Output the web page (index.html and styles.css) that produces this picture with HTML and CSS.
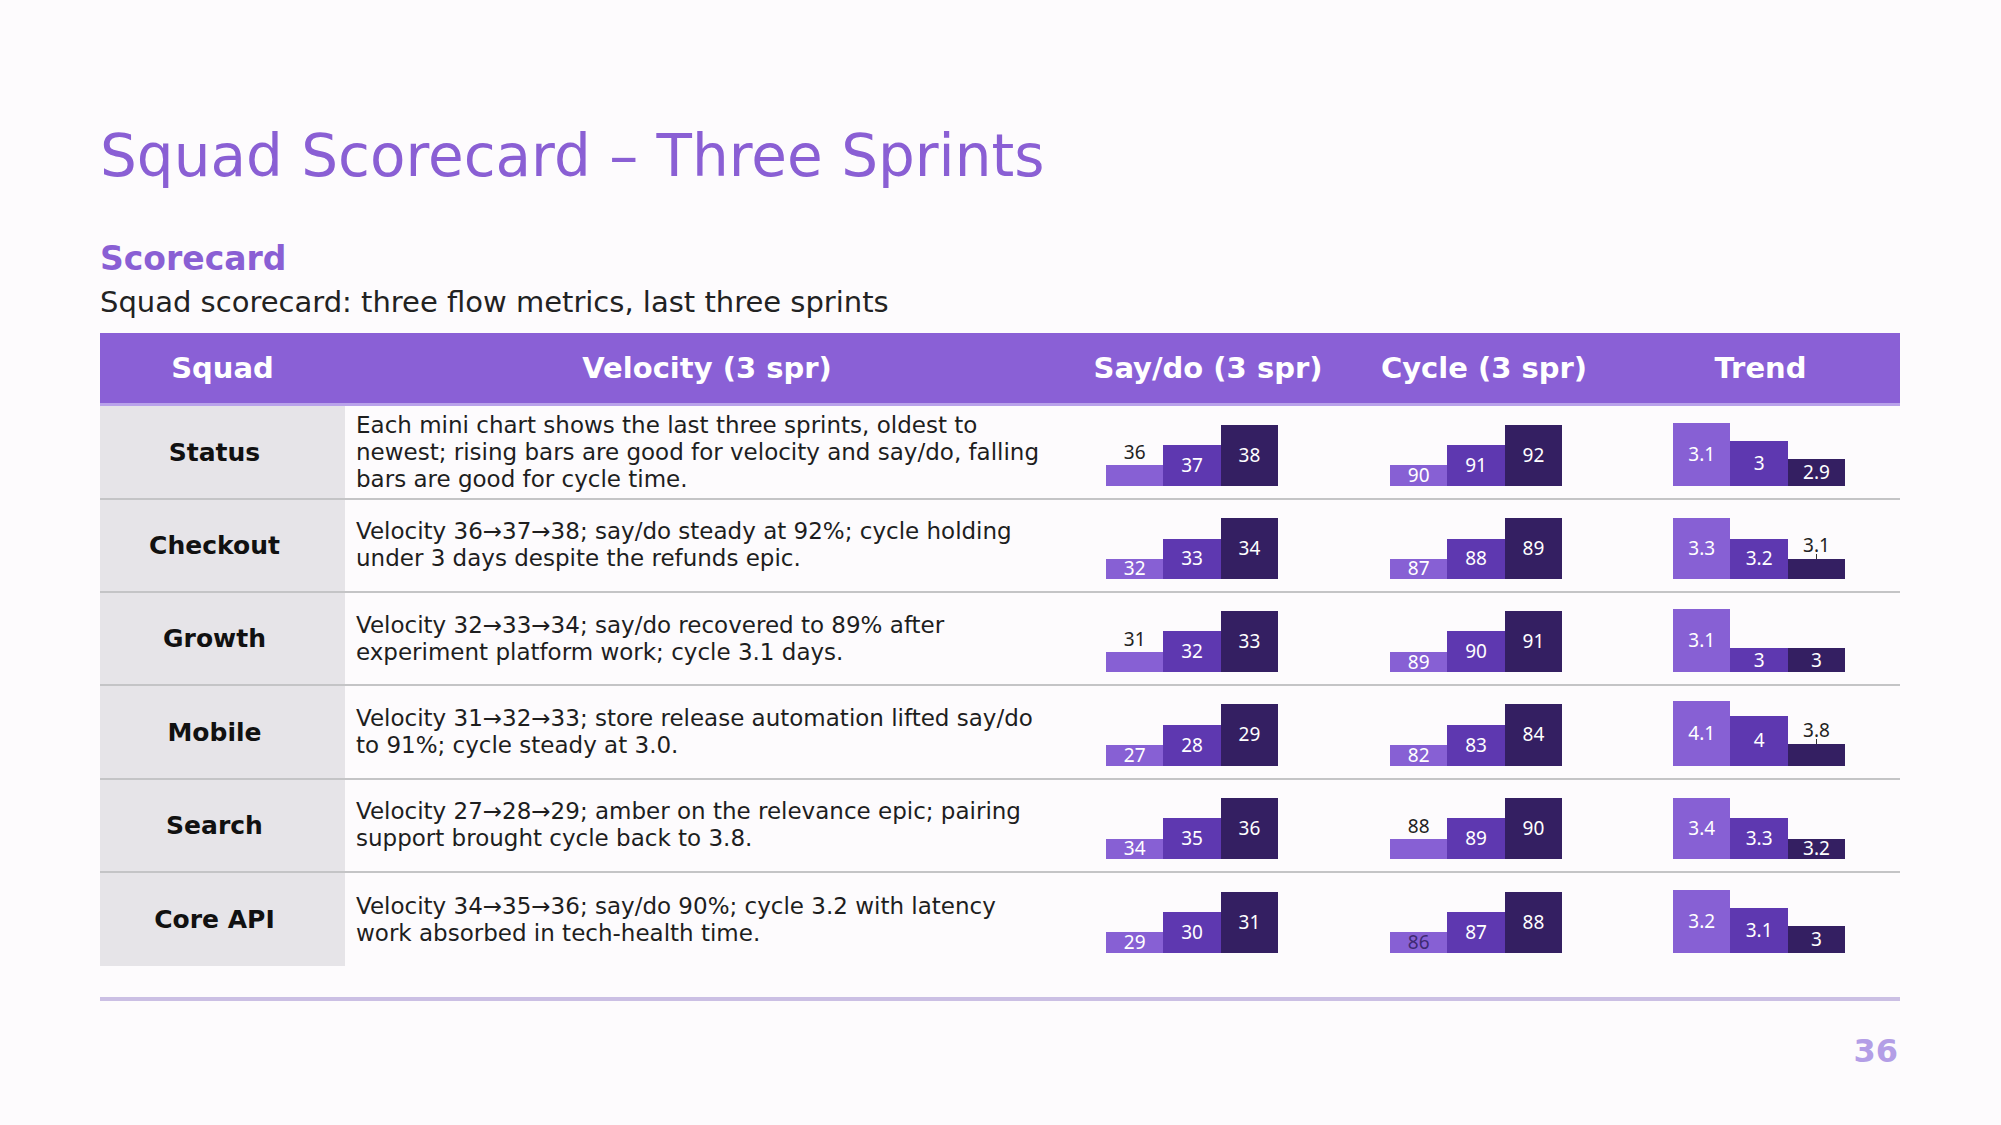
FILE: index.html
```html
<!DOCTYPE html>
<html lang="en">
<head>
    <meta charset="UTF-8">
    <meta name="viewport" content="width=device-width, initial-scale=1">
    <title>Squad Scorecard – Three Sprints</title>
    <link rel="stylesheet" href="styles.css">
</head>
<body>
    <div class="slide">
        <h1 class="title">Squad Scorecard – Three Sprints</h1>
        <h2 class="section">Scorecard</h2>
        <p class="caption">Squad scorecard: three flow metrics, last three sprints</p>

        <div class="scorecard">
            <div class="row head">
                <div class="cell">Squad</div>
                <div class="cell">Velocity (3 spr)</div>
                <div class="cell">Say/do (3 spr)</div>
                <div class="cell">Cycle (3 spr)</div>
                <div class="cell">Trend</div>
            </div>

            <div class="row">
                <div class="cell squad">Status</div>
                <div class="cell note">Each mini chart shows the last three sprints, oldest to newest; rising bars are good for velocity and say/do, falling bars are good for cycle time.</div>
                <div class="cell chart-cell vel">
                    <div class="mini">
                        <div class="col"><span class="out">36</span><div class="bar c1" style="height:21px"></div></div>
                        <div class="col"><div class="bar c2" style="height:41px">37</div></div>
                        <div class="col"><div class="bar c3" style="height:61px">38</div></div>
                    </div>
                </div>
                <div class="cell chart-cell cyc">
                    <div class="mini">
                        <div class="col"><div class="bar c1" style="height:21px">90</div></div>
                        <div class="col"><div class="bar c2" style="height:41px">91</div></div>
                        <div class="col"><div class="bar c3" style="height:61px">92</div></div>
                    </div>
                </div>
                <div class="cell chart-cell trend">
                    <div class="mini">
                        <div class="col"><div class="bar c1" style="height:63px">3.1</div></div>
                        <div class="col"><div class="bar c2" style="height:45px">3</div></div>
                        <div class="col"><div class="bar c3" style="height:27px">2.9</div></div>
                    </div>
                </div>
            </div>

            <div class="row">
                <div class="cell squad">Checkout</div>
                <div class="cell note">Velocity 36→37→38; say/do steady at 92%; cycle holding under 3 days despite the refunds epic.</div>
                <div class="cell chart-cell vel">
                    <div class="mini">
                        <div class="col"><div class="bar c1" style="height:20px">32</div></div>
                        <div class="col"><div class="bar c2" style="height:40px">33</div></div>
                        <div class="col"><div class="bar c3" style="height:61px">34</div></div>
                    </div>
                </div>
                <div class="cell chart-cell cyc">
                    <div class="mini">
                        <div class="col"><div class="bar c1" style="height:20px">87</div></div>
                        <div class="col"><div class="bar c2" style="height:40px">88</div></div>
                        <div class="col"><div class="bar c3" style="height:61px">89</div></div>
                    </div>
                </div>
                <div class="cell chart-cell trend">
                    <div class="mini">
                        <div class="col"><div class="bar c1" style="height:61px">3.3</div></div>
                        <div class="col"><div class="bar c2" style="height:40px">3.2</div></div>
                        <div class="col"><span class="out">3.1</span><i class="tick"></i><div class="bar c3" style="height:20px"></div></div>
                    </div>
                </div>
            </div>

            <div class="row">
                <div class="cell squad">Growth</div>
                <div class="cell note">Velocity 32→33→34; say/do recovered to 89% after experiment platform work; cycle 3.1 days.</div>
                <div class="cell chart-cell vel">
                    <div class="mini">
                        <div class="col"><span class="out">31</span><div class="bar c1" style="height:20px"></div></div>
                        <div class="col"><div class="bar c2" style="height:41px">32</div></div>
                        <div class="col"><div class="bar c3" style="height:61px">33</div></div>
                    </div>
                </div>
                <div class="cell chart-cell cyc">
                    <div class="mini">
                        <div class="col"><div class="bar c1" style="height:20px">89</div></div>
                        <div class="col"><div class="bar c2" style="height:41px">90</div></div>
                        <div class="col"><div class="bar c3" style="height:61px">91</div></div>
                    </div>
                </div>
                <div class="cell chart-cell trend">
                    <div class="mini">
                        <div class="col"><div class="bar c1" style="height:63px">3.1</div></div>
                        <div class="col"><div class="bar c2" style="height:24px">3</div></div>
                        <div class="col"><div class="bar c3" style="height:24px">3</div></div>
                    </div>
                </div>
            </div>

            <div class="row">
                <div class="cell squad">Mobile</div>
                <div class="cell note">Velocity 31→32→33; store release automation lifted say/do to 91%; cycle steady at 3.0.</div>
                <div class="cell chart-cell vel">
                    <div class="mini">
                        <div class="col"><div class="bar c1" style="height:21px">27</div></div>
                        <div class="col"><div class="bar c2" style="height:41px">28</div></div>
                        <div class="col"><div class="bar c3" style="height:62px">29</div></div>
                    </div>
                </div>
                <div class="cell chart-cell cyc">
                    <div class="mini">
                        <div class="col"><div class="bar c1" style="height:21px">82</div></div>
                        <div class="col"><div class="bar c2" style="height:41px">83</div></div>
                        <div class="col"><div class="bar c3" style="height:62px">84</div></div>
                    </div>
                </div>
                <div class="cell chart-cell trend">
                    <div class="mini">
                        <div class="col"><div class="bar c1" style="height:65px">4.1</div></div>
                        <div class="col"><div class="bar c2" style="height:50px">4</div></div>
                        <div class="col"><span class="out">3.8</span><i class="tick"></i><div class="bar c3" style="height:22px"></div></div>
                    </div>
                </div>
            </div>

            <div class="row">
                <div class="cell squad">Search</div>
                <div class="cell note">Velocity 27→28→29; amber on the relevance epic; pairing support brought cycle back to 3.8.</div>
                <div class="cell chart-cell vel">
                    <div class="mini">
                        <div class="col"><div class="bar c1" style="height:20px">34</div></div>
                        <div class="col"><div class="bar c2" style="height:41px">35</div></div>
                        <div class="col"><div class="bar c3" style="height:61px">36</div></div>
                    </div>
                </div>
                <div class="cell chart-cell cyc">
                    <div class="mini">
                        <div class="col"><span class="out">88</span><div class="bar c1" style="height:20px"></div></div>
                        <div class="col"><div class="bar c2" style="height:41px">89</div></div>
                        <div class="col"><div class="bar c3" style="height:61px">90</div></div>
                    </div>
                </div>
                <div class="cell chart-cell trend">
                    <div class="mini">
                        <div class="col"><div class="bar c1" style="height:61px">3.4</div></div>
                        <div class="col"><div class="bar c2" style="height:41px">3.3</div></div>
                        <div class="col"><div class="bar c3" style="height:20px">3.2</div></div>
                    </div>
                </div>
            </div>

            <div class="row">
                <div class="cell squad">Core API</div>
                <div class="cell note">Velocity 34→35→36; say/do 90%; cycle 3.2 with latency work absorbed in tech-health time.</div>
                <div class="cell chart-cell vel">
                    <div class="mini">
                        <div class="col"><div class="bar c1" style="height:21px">29</div></div>
                        <div class="col"><div class="bar c2" style="height:41px">30</div></div>
                        <div class="col"><div class="bar c3" style="height:61px">31</div></div>
                    </div>
                </div>
                <div class="cell chart-cell cyc">
                    <div class="mini">
                        <div class="col"><div class="bar c1 dim" style="height:21px">86</div></div>
                        <div class="col"><div class="bar c2" style="height:41px">87</div></div>
                        <div class="col"><div class="bar c3" style="height:61px">88</div></div>
                    </div>
                </div>
                <div class="cell chart-cell trend">
                    <div class="mini">
                        <div class="col"><div class="bar c1" style="height:63px">3.2</div></div>
                        <div class="col"><div class="bar c2" style="height:45px">3.1</div></div>
                        <div class="col"><div class="bar c3" style="height:27px">3</div></div>
                    </div>
                </div>
            </div>
        </div>

        <div class="rule"></div>
        <div class="page-num">36</div>
    </div>
</body>
</html>
```

FILE: styles.css
```css
body {
    margin: 0;
    background: #fdfbfd;
    color: #222;
    font-family: 'DejaVu Sans', sans-serif;
}

.slide {
    padding: 127px 101px 0 100px;
}

.title {
    margin: 0;
    font-size: 58px;
    line-height: 58px;
    font-weight: normal;
    color: #8a5fd4;
}

.section {
    margin: 54px 0 0;
    font-size: 33px;
    line-height: 1.2;
    font-weight: bold;
    color: #8a5fd4;
}

.caption {
    margin: 6px 0 0;
    font-size: 29px;
    line-height: 1.2;
    color: #222;
}

.scorecard {
    margin-top: 14px;
}

.row {
    display: grid;
    grid-template-columns: 245px 724px 278px 274px 1fr;
    height: 93.33px;
    box-sizing: border-box;
    border-bottom: 2px solid #c4c4c6;
}

.row:last-child {
    border-bottom: none;
}

.row.head {
    height: 73px;
    background: #8a60d6;
    border-bottom: 3px solid #b9a2ea;
}

.cell {
    display: flex;
    align-items: center;
}

.head .cell {
    justify-content: center;
    color: #fff;
    font-size: 29px;
    font-weight: bold;
}

.squad {
    justify-content: center;
    padding-right: 16px;
    background: #e6e4e8;
    font-size: 25px;
    font-weight: bold;
    color: #111;
}

.note {
    padding: 0 19px 0 11px;
    font-size: 23px;
    line-height: 27px;
    color: #1e1e1e;
}

.chart-cell.vel { padding-left: 37px; }
.chart-cell.cyc { padding-left: 43px; }
.chart-cell.trend { padding-left: 52px; }

.mini {
    display: flex;
    align-items: flex-end;
    height: 67px;
    font-family: 'Noto Sans', sans-serif;
    font-size: 19px;
}

.mini .col {
    width: 57.4px;
    display: flex;
    flex-direction: column;
    align-items: center;
}

.bar {
    width: 100%;
    display: flex;
    align-items: center;
    justify-content: center;
    color: #fff;
    line-height: 1;
}

.bar.c1 { background: #8760d4; }
.bar.c2 { background: #5e38b0; }
.bar.c3 { background: #341f62; }
.bar.dim { color: #3e2a72; }

.out {
    line-height: 20px;
    margin-bottom: 3px;
    color: #222;
}

.tick {
    display: block;
    width: 1px;
    height: 5px;
    background: #333;
}

.out:has(+ .tick) {
    margin-bottom: 0;
    line-height: 18px;
}

.rule {
    margin-top: 31px;
    height: 4px;
    background: #cbbfe4;
}

.page-num {
    margin-top: 31px;
    text-align: right;
    padding-right: 2px;
    font-size: 32px;
    line-height: 1.2;
    font-weight: bold;
    color: #b39ee6;
}
```
